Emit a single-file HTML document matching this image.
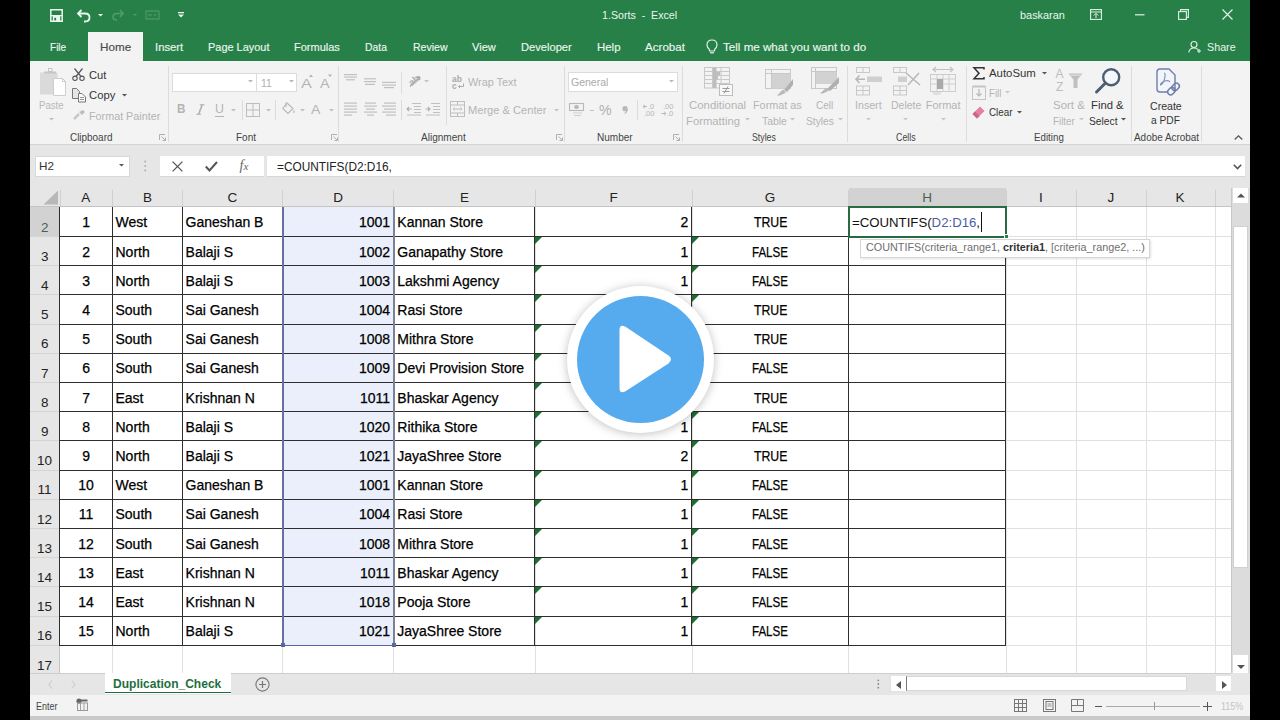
<!DOCTYPE html>
<html><head><meta charset="utf-8"><title>1.Sorts - Excel</title>
<style>
html,body{margin:0;padding:0;}
body{width:1280px;height:720px;background:#000;position:relative;overflow:hidden;font-family:"Liberation Sans", sans-serif;}
body div{position:absolute;box-sizing:border-box;}
.t{line-height:1;white-space:nowrap;}
.c{-webkit-text-stroke:0.25px #000;}
svg{position:absolute;overflow:visible;}
</style></head><body>

<div style="left:30px;top:0px;width:1220px;height:720px;background:#e6e6e6"></div>
<div style="left:30px;top:0px;width:1220px;height:61px;background:#278047"></div>
<div style="left:30px;top:61px;width:1220px;height:84px;background:#f3f3f3"></div>
<div style="left:30px;top:144px;width:1220px;height:1px;background:#d4d4d4"></div>
<div style="left:88px;top:32px;width:55px;height:30px;background:#f3f3f3"></div>
<div class="t" style="left:602.00px;top:10.19px;font-size:11px;color:#eaf6ee;transform:scaleX(0.9679);transform-origin:0 0;">1.Sorts&nbsp; - &nbsp;Excel</div>
<div class="t" style="left:1020.40px;top:10.19px;font-size:11px;color:#eaf6ee;transform:scaleX(0.9911);transform-origin:0 0;">baskaran</div>
<div class="t" style="left:50.00px;top:41.63px;font-size:11.3px;color:#eaf6ee;transform:scaleX(0.8889);transform-origin:0 0;-webkit-text-stroke:0.15px #eaf6ee;">File</div>
<div class="t" style="left:155.00px;top:41.63px;font-size:11.3px;color:#eaf6ee;-webkit-text-stroke:0.15px #eaf6ee;">Insert</div>
<div class="t" style="left:208.00px;top:41.63px;font-size:11.3px;color:#eaf6ee;transform:scaleX(0.9683);transform-origin:0 0;-webkit-text-stroke:0.15px #eaf6ee;">Page Layout</div>
<div class="t" style="left:293.75px;top:41.63px;font-size:11.3px;color:#eaf6ee;transform:scaleX(0.9734);transform-origin:0 0;-webkit-text-stroke:0.15px #eaf6ee;">Formulas</div>
<div class="t" style="left:365.00px;top:41.63px;font-size:11.3px;color:#eaf6ee;transform:scaleX(0.9200);transform-origin:0 0;-webkit-text-stroke:0.15px #eaf6ee;">Data</div>
<div class="t" style="left:413.00px;top:41.63px;font-size:11.3px;color:#eaf6ee;transform:scaleX(0.9324);transform-origin:0 0;-webkit-text-stroke:0.15px #eaf6ee;">Review</div>
<div class="t" style="left:472.00px;top:41.63px;font-size:11.3px;color:#eaf6ee;transform:scaleX(0.9792);transform-origin:0 0;-webkit-text-stroke:0.15px #eaf6ee;">View</div>
<div class="t" style="left:520.50px;top:41.63px;font-size:11.3px;color:#eaf6ee;transform:scaleX(0.9856);transform-origin:0 0;-webkit-text-stroke:0.15px #eaf6ee;">Developer</div>
<div class="t" style="left:596.75px;top:41.63px;font-size:11.3px;color:#eaf6ee;transform:scaleX(1.0109);transform-origin:0 0;-webkit-text-stroke:0.15px #eaf6ee;">Help</div>
<div class="t" style="left:645.00px;top:41.63px;font-size:11.3px;color:#eaf6ee;transform:scaleX(1.0256);transform-origin:0 0;-webkit-text-stroke:0.15px #eaf6ee;">Acrobat</div>
<div class="t" style="left:723.00px;top:41.63px;font-size:11.3px;color:#eaf6ee;transform:scaleX(1.0270);transform-origin:0 0;-webkit-text-stroke:0.15px #eaf6ee;">Tell me what you want to do</div>
<div class="t" style="left:99.50px;top:41.63px;font-size:11.3px;color:#4a4a4a;transform:scaleX(1.0333);transform-origin:0 0;-webkit-text-stroke:0.15px #4a4a4a;">Home</div>
<div class="t" style="left:1206.70px;top:42.19px;font-size:11px;color:#eaf6ee;transform:scaleX(0.9759);transform-origin:0 0;">Share</div>
<svg style="left:50px;top:9px;" width="13" height="13" viewBox="0 0 13 13"><path d="M0.8 0.8 H12.2 V12.2 H0.8 Z" fill="none" stroke="#eaf6ee" stroke-width="1.5"/><rect x="0.8" y="6" width="11.4" height="1.3" fill="#eaf6ee"/><rect x="2.8" y="7" width="7.4" height="5" fill="#eaf6ee"/><rect x="4.3" y="8.8" width="1.8" height="2.6" fill="#278047"/></svg>
<svg style="left:77px;top:9px;" width="14" height="14" viewBox="0 0 14 14"><path d="M4.5 1 L1 4.5 L4.5 8" fill="none" stroke="#eaf6ee" stroke-width="1.8"/><path d="M1.5 4.5 H8 Q12.5 4.5 12.5 8.5 Q12.5 12.5 8 12.5 H7" fill="none" stroke="#eaf6ee" stroke-width="1.8"/></svg>
<svg style="left:98px;top:14px;" width="5" height="3" viewBox="0 0 5 3"><path d="M0 0 H5 L2.5 2.5 Z" fill="#eaf6ee"/></svg>
<svg style="left:112px;top:9px;" width="12" height="12" viewBox="0 0 12 12"><path d="M8 1 L11 4.5 L8 8" fill="none" stroke="#4f9d6c" stroke-width="1.6"/><path d="M10.5 4.5 H5 Q1 4.5 1 8 Q1 11 5 11" fill="none" stroke="#4f9d6c" stroke-width="1.6"/></svg>
<svg style="left:133px;top:14px;" width="4" height="3" viewBox="0 0 4 3"><path d="M0 0 H4 L2 2 Z" fill="#4f9d6c"/></svg>
<svg style="left:145px;top:9px;" width="15" height="11" viewBox="0 0 15 11"><path d="M1 2 H14 V10 H1 Z" fill="none" stroke="#4a9566" stroke-width="1.3"/><path d="M3 5 L5 7 L7 5 M9 7 L11 5" fill="none" stroke="#4a9566" stroke-width="1.1"/></svg>
<svg style="left:177.5px;top:12px;" width="6" height="6" viewBox="0 0 6 6"><rect x="0" y="0" width="6" height="1.3" fill="#eaf6ee"/><path d="M0 2.5 H6 L3 5.5 Z" fill="#eaf6ee"/></svg>
<svg style="left:1090px;top:9px;" width="12" height="11" viewBox="0 0 12 11"><rect x="0.6" y="0.6" width="10.8" height="9.8" fill="none" stroke="#e2f1e7" stroke-width="1.1"/><path d="M0.6 3 H11.4" stroke="#e2f1e7" stroke-width="1"/><path d="M6 9 V4.5 M3.8 6.5 L6 4.3 L8.2 6.5" fill="none" stroke="#e2f1e7" stroke-width="1"/></svg>
<svg style="left:1135px;top:14px;" width="10" height="2" viewBox="0 0 10 2"><rect x="0" y="0.2" width="9.5" height="1.2" fill="#e2f1e7"/></svg>
<svg style="left:1178px;top:9px;" width="11" height="11" viewBox="0 0 11 11"><rect x="0.6" y="2.6" width="7.8" height="7.8" fill="none" stroke="#e2f1e7" stroke-width="1.1"/><path d="M2.6 2.6 V0.6 H10.4 V8.4 H8.4" fill="none" stroke="#e2f1e7" stroke-width="1.1"/></svg>
<svg style="left:1222px;top:9px;" width="11" height="11" viewBox="0 0 11 11"><path d="M0.5 0.5 L10.5 10.5 M10.5 0.5 L0.5 10.5" stroke="#e2f1e7" stroke-width="1.2"/></svg>
<svg style="left:706px;top:39px;" width="12" height="16" viewBox="0 0 12 16"><path d="M6 1 Q11 1 11 6 Q11 8.5 8.5 10.5 V12 H3.5 V10.5 Q1 8.5 1 6 Q1 1 6 1 Z" fill="none" stroke="#e2f1e7" stroke-width="1.2"/><path d="M4 13.8 H8" stroke="#e2f1e7" stroke-width="1.2"/></svg>
<svg style="left:1188px;top:41px;" width="14" height="12" viewBox="0 0 14 12"><circle cx="6" cy="3.5" r="3" fill="none" stroke="#e2f1e7" stroke-width="1.1"/><path d="M0.8 11.5 Q1.5 7 6 7 Q8.5 7 10 8.5" fill="none" stroke="#e2f1e7" stroke-width="1.1"/><path d="M11 8 V12 M9 10 H13" stroke="#e2f1e7" stroke-width="1.1"/></svg>
<div style="left:168px;top:66px;width:1px;height:76px;background:#dcdcdc"></div>
<div style="left:338px;top:66px;width:1px;height:76px;background:#dcdcdc"></div>
<div style="left:564px;top:66px;width:1px;height:76px;background:#dcdcdc"></div>
<div style="left:681.5px;top:66px;width:1px;height:76px;background:#dcdcdc"></div>
<div style="left:847px;top:66px;width:1px;height:76px;background:#dcdcdc"></div>
<div style="left:966px;top:66px;width:1px;height:76px;background:#dcdcdc"></div>
<div style="left:1130.5px;top:66px;width:1px;height:76px;background:#dcdcdc"></div>
<div style="left:1200.5px;top:66px;width:1px;height:76px;background:#dcdcdc"></div>
<div class="t" style="left:70.30px;top:132.41px;font-size:10.5px;color:#444;transform:scaleX(0.9444);transform-origin:0 0;">Clipboard</div>
<div class="t" style="left:236.00px;top:132.41px;font-size:10.5px;color:#444;transform:scaleX(0.9524);transform-origin:0 0;">Font</div>
<div class="t" style="left:421.00px;top:132.41px;font-size:10.5px;color:#444;transform:scaleX(0.9574);transform-origin:0 0;">Alignment</div>
<div class="t" style="left:596.90px;top:132.41px;font-size:10.5px;color:#444;transform:scaleX(0.9553);transform-origin:0 0;">Number</div>
<div class="t" style="left:751.70px;top:132.41px;font-size:10.5px;color:#444;transform:scaleX(0.8345);transform-origin:0 0;">Styles</div>
<div class="t" style="left:896.30px;top:132.41px;font-size:10.5px;color:#444;transform:scaleX(0.8417);transform-origin:0 0;">Cells</div>
<div class="t" style="left:1033.80px;top:132.41px;font-size:10.5px;color:#444;transform:scaleX(0.9281);transform-origin:0 0;">Editing</div>
<div class="t" style="left:1133.60px;top:132.41px;font-size:10.5px;color:#444;transform:scaleX(0.9449);transform-origin:0 0;">Adobe Acrobat</div>
<svg style="left:159px;top:134px;" width="7" height="7" viewBox="0 0 7 7"><path d="M0.5 0.5 H6 M0.5 0.5 V6" stroke="#b0b0b0" stroke-width="1" fill="none"/><path d="M2.5 2.5 L6.5 6.5 M6.5 3.5 V6.5 H3.5" stroke="#b0b0b0" stroke-width="1" fill="none"/></svg>
<svg style="left:331px;top:134px;" width="7" height="7" viewBox="0 0 7 7"><path d="M0.5 0.5 H6 M0.5 0.5 V6" stroke="#b0b0b0" stroke-width="1" fill="none"/><path d="M2.5 2.5 L6.5 6.5 M6.5 3.5 V6.5 H3.5" stroke="#b0b0b0" stroke-width="1" fill="none"/></svg>
<svg style="left:556px;top:134px;" width="7" height="7" viewBox="0 0 7 7"><path d="M0.5 0.5 H6 M0.5 0.5 V6" stroke="#b0b0b0" stroke-width="1" fill="none"/><path d="M2.5 2.5 L6.5 6.5 M6.5 3.5 V6.5 H3.5" stroke="#b0b0b0" stroke-width="1" fill="none"/></svg>
<svg style="left:673px;top:134px;" width="7" height="7" viewBox="0 0 7 7"><path d="M0.5 0.5 H6 M0.5 0.5 V6" stroke="#b0b0b0" stroke-width="1" fill="none"/><path d="M2.5 2.5 L6.5 6.5 M6.5 3.5 V6.5 H3.5" stroke="#b0b0b0" stroke-width="1" fill="none"/></svg>
<svg style="left:1234px;top:134.5px;" width="9" height="5" viewBox="0 0 9 5"><path d="M0.7 4.5 L4.5 0.8 L8.3 4.5" fill="none" stroke="#555" stroke-width="1.3"/></svg>
<svg style="left:39px;top:66px;" width="28" height="31" viewBox="0 0 28 31"><rect x="1" y="6.5" width="17.5" height="22" fill="#dadada"/><rect x="5" y="5.5" width="12" height="2" fill="#c6c6c6"/><rect x="9.5" y="2.5" width="3.5" height="3" fill="none" stroke="#c6c6c6" stroke-width="1"/><path d="M14.5 12.5 H23.5 L26.5 15.5 V29.5 H14.5 Z" fill="#fff" stroke="#cdcdcd" stroke-width="1"/><path d="M23.5 12.5 V15.5 H26.5" fill="none" stroke="#cdcdcd" stroke-width="1"/></svg>
<div class="t" style="left:38.75px;top:99.81px;font-size:10.5px;color:#b8b8b8;transform:scaleX(0.9130);transform-origin:0 0;">Paste</div>
<svg style="left:48.5px;top:118.0px;" width="5" height="3" viewBox="0 0 5 3"><path d="M0 0 H5 L2.5 2.6 Z" fill="#c0c0c0"/></svg>
<svg style="left:72px;top:68px;" width="13" height="13" viewBox="0 0 13 13"><path d="M2.5 0.5 L9 8.5 M10.5 0.5 L4 8.5" stroke="#555" stroke-width="1.2" fill="none"/><circle cx="3" cy="10.3" r="2.2" fill="none" stroke="#555" stroke-width="1.1"/><circle cx="10" cy="10.3" r="2.2" fill="none" stroke="#555" stroke-width="1.1"/></svg>
<div class="t" style="left:88.60px;top:69.89px;font-size:11px;color:#333;transform:scaleX(1.0118);transform-origin:0 0;">Cut</div>
<svg style="left:72px;top:88px;" width="14" height="14" viewBox="0 0 14 14"><path d="M0.5 0.5 H4.5 L7.5 3.5 V10.5 H0.5 Z" fill="#e6e6e6" stroke="#777" stroke-width="1"/><path d="M6.5 5.5 H10 L13.5 9 V14 H6.5 Z" fill="#fafafa" stroke="#777" stroke-width="1"/><path d="M8 9.5 H12 M8 11.5 H12" stroke="#888" stroke-width="0.9"/></svg>
<div class="t" style="left:88.60px;top:89.99px;font-size:11px;color:#333;transform:scaleX(1.0231);transform-origin:0 0;">Copy</div>
<svg style="left:121.5px;top:93.5px;" width="5" height="3" viewBox="0 0 5 3"><path d="M0 0 H5 L2.5 2.6 Z" fill="#555"/></svg>
<svg style="left:73px;top:110px;" width="13" height="10" viewBox="0 0 13 10"><path d="M1 9 L6 4" stroke="#c8c8c8" stroke-width="2.5"/><path d="M6 2 L9 5 L12 2 L10 0 Z" fill="#bdbdbd"/></svg>
<div class="t" style="left:89.00px;top:111.29px;font-size:11px;color:#b4b4b4;transform:scaleX(0.9795);transform-origin:0 0;">Format Painter</div>
<div style="left:171.5px;top:72.5px;width:85px;height:19.5px;background:#fff;border:1px solid #dcdcdc"></div>
<div style="left:256px;top:72.5px;width:41px;height:19.5px;background:#fff;border:1px solid #dcdcdc"></div>
<svg style="left:248.3px;top:80.0px;" width="5" height="3" viewBox="0 0 5 3"><path d="M0 0 H5 L2.5 2.6 Z" fill="#b8b8b8"/></svg>
<svg style="left:289.1px;top:80.0px;" width="5" height="3" viewBox="0 0 5 3"><path d="M0 0 H5 L2.5 2.6 Z" fill="#b8b8b8"/></svg>
<div class="t" style="left:260.60px;top:77.71px;font-size:10.5px;color:#b0b0b0;transform:scaleX(0.9909);transform-origin:0 0;">11</div>
<div class="t" style="left:300.70px;top:76.57px;font-size:13.5px;color:#b4b4b4;transform:scaleX(1.2000);transform-origin:0 0;">A</div>
<svg style="left:309px;top:74px;" width="4" height="3" viewBox="0 0 4 3"><path d="M0 3 L2 0.5 L4 3Z" fill="#b0b0b0"/></svg>
<div class="t" style="left:320.40px;top:77.84px;font-size:12px;color:#b4b4b4;transform:scaleX(1.2000);transform-origin:0 0;">A</div>
<svg style="left:328px;top:74px;" width="4" height="3" viewBox="0 0 4 3"><path d="M0 0.5 H4 L2 3Z" fill="#b0b0b0"/></svg>
<div class="t" style="left:177.00px;top:103.42px;font-size:12.5px;color:#b4b4b4;font-weight:bold;transform:scaleX(0.9333);transform-origin:0 0;">B</div>
<svg style="left:196px;top:104px;" width="9" height="11" viewBox="0 0 9 11"><path d="M6.2 0.8 L2.6 10.2" stroke="#b0b0b0" stroke-width="1.6"/><path d="M3.8 0.8 H8.5 M0.3 10.2 H5" stroke="#b0b0b0" stroke-width="1.1"/></svg>
<div class="t" style="left:214.50px;top:103.42px;font-size:12.5px;color:#b4b4b4;transform:scaleX(0.9889);transform-origin:0 0;">U</div>
<div style="left:214.5px;top:116px;width:9px;height:1px;background:#b4b4b4"></div>
<svg style="left:231.1px;top:108.5px;" width="5" height="3" viewBox="0 0 5 3"><path d="M0 0 H5 L2.5 2.6 Z" fill="#c0c0c0"/></svg>
<div style="left:241.6px;top:100px;width:1px;height:20px;background:#dcdcdc"></div>
<svg style="left:246px;top:103px;" width="14" height="14" viewBox="0 0 14 14"><rect x="0.5" y="0.5" width="13" height="13" fill="none" stroke="#bdbdbd" stroke-width="1"/><path d="M7 0.5 V13.5 M0.5 7 H13.5" stroke="#bdbdbd" stroke-width="1"/></svg>
<svg style="left:265.9px;top:108.5px;" width="5" height="3" viewBox="0 0 5 3"><path d="M0 0 H5 L2.5 2.6 Z" fill="#c0c0c0"/></svg>
<div style="left:274.7px;top:100px;width:1px;height:20px;background:#dcdcdc"></div>
<svg style="left:282px;top:102px;" width="13" height="13" viewBox="0 0 13 13"><path d="M5 1 L11 6.5 L6 11.5 L0.8 6.5 Z" fill="none" stroke="#b8b8b8" stroke-width="1.1"/><path d="M4 0.5 V5" stroke="#b8b8b8" stroke-width="1.1"/><path d="M11.5 8 Q12.8 10 11.5 11" stroke="#c0c0c0" stroke-width="1.2" fill="none"/></svg>
<svg style="left:299.5px;top:108.5px;" width="5" height="3" viewBox="0 0 5 3"><path d="M0 0 H5 L2.5 2.6 Z" fill="#c0c0c0"/></svg>
<div class="t" style="left:311.30px;top:103.00px;font-size:13px;color:#b4b4b4;transform:scaleX(1.0778);transform-origin:0 0;">A</div>
<svg style="left:328.5px;top:108.5px;" width="5" height="3" viewBox="0 0 5 3"><path d="M0 0 H5 L2.5 2.6 Z" fill="#c0c0c0"/></svg>
<svg style="left:344.3px;top:0px;" width="16" height="130" viewBox="0 0 16 130"><rect x="0" y="74" width="13" height="1.2" fill="#c0c0c0"/><rect x="0" y="76.5" width="13" height="1.2" fill="#c0c0c0"/><rect x="2" y="79.2" width="9" height="1.2" fill="#c0c0c0"/></svg>
<svg style="left:364px;top:0px;" width="16" height="130" viewBox="0 0 16 130"><rect x="0" y="78.2" width="12" height="1.2" fill="#c0c0c0"/><rect x="0" y="81" width="12" height="1.2" fill="#c0c0c0"/><rect x="1" y="83.8" width="10" height="1.2" fill="#c0c0c0"/></svg>
<svg style="left:382px;top:0px;" width="16" height="130" viewBox="0 0 16 130"><rect x="0" y="81.8" width="14" height="1.2" fill="#c0c0c0"/><rect x="0" y="84.5" width="14" height="1.2" fill="#c0c0c0"/><rect x="2" y="87" width="10" height="1.2" fill="#c0c0c0"/></svg>
<div style="left:401.3px;top:72px;width:1px;height:22px;background:#dcdcdc"></div>
<svg style="left:407px;top:74px;" width="14" height="14" viewBox="0 0 14 14"><text x="1" y="10" font-size="9.5" font-weight="bold" fill="#b0b0b0" font-family="Liberation Sans" transform="rotate(-40 6 6)">ab</text><path d="M3 12.5 L12.5 3 M9.5 2.8 H12.7 V6" stroke="#a8a8a8" stroke-width="1.2" fill="none"/></svg>
<svg style="left:423.9px;top:79.5px;" width="5" height="3" viewBox="0 0 5 3"><path d="M0 0 H5 L2.5 2.6 Z" fill="#c4c4c4"/></svg>
<svg style="left:344.3px;top:0px;" width="16" height="130" viewBox="0 0 16 130"><rect x="0" y="102.5" width="13" height="1.2" fill="#c0c0c0"/><rect x="0" y="105.5" width="13" height="1.2" fill="#c0c0c0"/><rect x="0" y="108.5" width="13" height="1.2" fill="#c0c0c0"/><rect x="0" y="111.5" width="13" height="1.2" fill="#c0c0c0"/><rect x="0" y="114.5" width="8" height="1.2" fill="#c0c0c0"/></svg>
<svg style="left:364px;top:0px;" width="16" height="130" viewBox="0 0 16 130"><rect x="1" y="102.5" width="11" height="1.2" fill="#c0c0c0"/><rect x="0" y="105.5" width="13" height="1.2" fill="#c0c0c0"/><rect x="2" y="108.5" width="9" height="1.2" fill="#c0c0c0"/><rect x="0" y="111.5" width="13" height="1.2" fill="#c0c0c0"/><rect x="3" y="114.5" width="7" height="1.2" fill="#c0c0c0"/></svg>
<svg style="left:382px;top:0px;" width="16" height="130" viewBox="0 0 16 130"><rect x="2" y="102.5" width="12" height="1.2" fill="#c0c0c0"/><rect x="0" y="105.5" width="14" height="1.2" fill="#c0c0c0"/><rect x="2" y="108.5" width="12" height="1.2" fill="#c0c0c0"/><rect x="0" y="111.5" width="14" height="1.2" fill="#c0c0c0"/><rect x="4" y="114.5" width="10" height="1.2" fill="#c0c0c0"/></svg>
<div style="left:401.3px;top:100px;width:1px;height:20px;background:#dcdcdc"></div>
<svg style="left:406px;top:102px;" width="16" height="14" viewBox="0 0 16 14"><path d="M6 1.5 H15 M8 4.5 H15 M8 7.5 H15 M8 10.5 H15 M1 13 H15" stroke="#c0c0c0" stroke-width="1.1"/><path d="M5.5 7 H1 M3 5 L1 7 L3 9" stroke="#b0b0b0" stroke-width="1.1" fill="none"/></svg>
<svg style="left:425px;top:102px;" width="16" height="14" viewBox="0 0 16 14"><path d="M6 1.5 H15 M8 4.5 H15 M8 7.5 H15 M8 10.5 H15 M1 13 H15" stroke="#c0c0c0" stroke-width="1.1"/><path d="M0.5 7 H5 M3 5 L5 7 L3 9" stroke="#b0b0b0" stroke-width="1.1" fill="none"/></svg>
<div style="left:445.8px;top:66px;width:1px;height:59px;background:#dcdcdc"></div>
<svg style="left:451.5px;top:74.5px;" width="13" height="15" viewBox="0 0 13 15"><text x="0" y="7" font-size="8.5" font-weight="bold" fill="#ababab" font-family="Liberation Sans">ab</text><text x="0" y="14" font-size="8.5" font-weight="bold" fill="#ababab" font-family="Liberation Sans">c</text><path d="M11.5 8.5 V11.5 H6.5 M8 10 L6.5 11.5 L8 13" stroke="#ababab" stroke-width="1" fill="none"/></svg>
<div class="t" style="left:467.70px;top:76.99px;font-size:11px;color:#b4b4b4;transform:scaleX(0.9857);transform-origin:0 0;">Wrap Text</div>
<svg style="left:449.8px;top:100.5px;" width="15" height="16" viewBox="0 0 15 16"><rect x="0.5" y="0.5" width="14" height="15" fill="none" stroke="#bfbfbf" stroke-width="1"/><path d="M0.5 4 H14.5 M0.5 12 H14.5 M7.5 0.5 V4 M7.5 12 V15.5 M3 8 H12 M4.5 6.5 L3 8 L4.5 9.5 M10.5 6.5 L12 8 L10.5 9.5" stroke="#bfbfbf" stroke-width="1" fill="none"/></svg>
<div class="t" style="left:467.70px;top:104.69px;font-size:11px;color:#b4b4b4;transform:scaleX(1.0090);transform-origin:0 0;">Merge &amp; Center</div>
<svg style="left:553.8px;top:108.5px;" width="5" height="3" viewBox="0 0 5 3"><path d="M0 0 H5 L2.5 2.6 Z" fill="#c4c4c4"/></svg>
<div style="left:567.5px;top:72.4px;width:110px;height:19.4px;background:#fff;border:1px solid #dcdcdc"></div>
<div class="t" style="left:571.00px;top:76.89px;font-size:11px;color:#aaaaaa;transform:scaleX(0.9538);transform-origin:0 0;">General</div>
<svg style="left:669.3px;top:80.0px;" width="5" height="3" viewBox="0 0 5 3"><path d="M0 0 H5 L2.5 2.6 Z" fill="#b8b8b8"/></svg>
<svg style="left:569px;top:103px;" width="16" height="14" viewBox="0 0 16 14"><rect x="0.5" y="0.5" width="14" height="7" fill="none" stroke="#b8b8b8" stroke-width="1.1"/><ellipse cx="7.5" cy="4" rx="2.5" ry="2" fill="#b8b8b8"/><path d="M4 10 H13 M5 12.5 H12" stroke="#d0d0d0" stroke-width="1.1"/></svg>
<div style="left:590px;top:110px;width:4px;height:1.2px;background:#c4c4c4"></div>
<div class="t" style="left:599.20px;top:103.33px;font-size:14.5px;color:#b0b0b0;transform:scaleX(0.9769);transform-origin:0 0;">%</div>
<svg style="left:621.7px;top:105.5px;" width="6" height="8" viewBox="0 0 6 8"><circle cx="3" cy="2.7" r="2.6" fill="#b8b8b8"/><path d="M5.3 3 Q5 6.5 2.5 7.5" stroke="#b8b8b8" stroke-width="1.3" fill="none"/></svg>
<div style="left:637.4px;top:100px;width:1px;height:20px;background:#dcdcdc"></div>
<svg style="left:642px;top:103px;" width="15" height="14" viewBox="0 0 15 14"><path d="M5 3.5 H1 M2.8 1.8 L1 3.5 L2.8 5.2" stroke="#b5b5b5" stroke-width="1" fill="none"/><text x="6" y="6" font-size="7.5" fill="#b5b5b5" font-family="Liberation Sans">.0</text><text x="2" y="13" font-size="7.5" fill="#b5b5b5" font-family="Liberation Sans">.00</text></svg>
<svg style="left:660.8px;top:103px;" width="15" height="14" viewBox="0 0 15 14"><text x="2" y="6" font-size="7.5" fill="#b5b5b5" font-family="Liberation Sans">.00</text><path d="M0.5 10.5 H5 M3.2 8.8 L5 10.5 L3.2 12.2" stroke="#b5b5b5" stroke-width="1" fill="none"/><text x="6" y="13" font-size="7.5" fill="#b5b5b5" font-family="Liberation Sans">.0</text></svg>
<svg style="left:704px;top:67px;" width="30" height="29" viewBox="0 0 30 29"><g stroke="#c8c8c8" stroke-width="1" fill="none"><rect x="0.5" y="0.5" width="25" height="20.5"/><path d="M8.5 0.5 V21 M17 0.5 V21 M0.5 4.5 H26 M0.5 8.5 H26 M0.5 12.5 H26 M0.5 16.5 H26"/></g><rect x="9" y="1" width="3.5" height="20" fill="#bdbdbd"/><rect x="12" y="5" width="4" height="3.5" fill="#bdbdbd"/><rect x="12" y="9" width="2" height="3" fill="#bdbdbd"/><rect x="15.5" y="17.5" width="13" height="11" fill="#f8f8f8" stroke="#bdbdbd" stroke-width="1"/><path d="M18.5 21.5 H25.5 M18.5 24.5 H25.5 M24 19.5 L20 26.5" stroke="#9a9a9a" stroke-width="1"/></svg>
<div class="t" style="left:688.60px;top:99.79px;font-size:11px;color:#b4b4b4;transform:scaleX(1.0382);transform-origin:0 0;">Conditional</div>
<div class="t" style="left:686.00px;top:115.69px;font-size:11px;color:#b4b4b4;transform:scaleX(1.0264);transform-origin:0 0;">Formatting</div>
<svg style="left:744.5px;top:117.5px;" width="5" height="3" viewBox="0 0 5 3"><path d="M0 0 H5 L2.5 2.6 Z" fill="#c4c4c4"/></svg>
<svg style="left:765px;top:69px;" width="29" height="27" viewBox="0 0 29 27"><g stroke="#c8c8c8" stroke-width="1" fill="none"><rect x="0.5" y="0.5" width="25" height="19"/><path d="M0.5 4.5 H26 M6.5 0.5 V20"/></g><rect x="7" y="5" width="18.5" height="14.5" fill="#d2d2d2"/><path d="M12 26.5 L18 20.5 L21 23.5 L15 26.5 Z" fill="#b8b8b8"/><path d="M19 21 L28 10 V16 L22 23 Z" fill="#b0b0b0"/></svg>
<div class="t" style="left:753.00px;top:99.79px;font-size:11px;color:#b4b4b4;transform:scaleX(0.9840);transform-origin:0 0;">Format as</div>
<div class="t" style="left:761.70px;top:115.69px;font-size:11px;color:#b4b4b4;transform:scaleX(0.9423);transform-origin:0 0;">Table</div>
<svg style="left:789.7px;top:117.5px;" width="5" height="3" viewBox="0 0 5 3"><path d="M0 0 H5 L2.5 2.6 Z" fill="#c4c4c4"/></svg>
<svg style="left:810.8px;top:67px;" width="29" height="27" viewBox="0 0 29 27"><g stroke="#c8c8c8" stroke-width="1" fill="none"><rect x="0.5" y="0.5" width="25" height="21"/><path d="M0.5 4.5 H26 M4.5 0.5 V22"/></g><rect x="5" y="5" width="20.5" height="12" fill="#d2d2d2"/><path d="M9 26.5 L15 21 L18 23.5 L12 26.5 Z" fill="#b8b8b8"/><path d="M16 22 L28 10 V16 L19 24 Z" fill="#b0b0b0"/></svg>
<div class="t" style="left:815.50px;top:99.79px;font-size:11px;color:#b4b4b4;transform:scaleX(0.9053);transform-origin:0 0;">Cell</div>
<div class="t" style="left:806.20px;top:115.69px;font-size:11px;color:#b4b4b4;transform:scaleX(0.9267);transform-origin:0 0;">Styles</div>
<svg style="left:837.5px;top:117.5px;" width="5" height="3" viewBox="0 0 5 3"><path d="M0 0 H5 L2.5 2.6 Z" fill="#c4c4c4"/></svg>
<svg style="left:854.8px;top:67px;" width="28" height="28" viewBox="0 0 28 28"><g stroke="#c8c8c8" stroke-width="1" fill="none"><rect x="1.5" y="0.5" width="13" height="5"/><path d="M8 0.5 V5.5"/><rect x="1.5" y="19" width="13" height="9"/><path d="M8 19 V28 M1.5 23.5 H14.5"/></g><rect x="12" y="9.5" width="15" height="5.5" fill="#cfcfcf"/><path d="M10 12.2 H1 M4.5 8.5 L1 12.2 L4.5 16" stroke="#b8b8b8" stroke-width="1.6" fill="none"/></svg>
<div class="t" style="left:855.40px;top:100.49px;font-size:11px;color:#b4b4b4;transform:scaleX(0.9679);transform-origin:0 0;">Insert</div>
<svg style="left:866.1px;top:118.1px;" width="5" height="3" viewBox="0 0 5 3"><path d="M0 0 H5 L2.5 2.6 Z" fill="#c8c8c8"/></svg>
<svg style="left:892.8px;top:67px;" width="28" height="28" viewBox="0 0 28 28"><g stroke="#c8c8c8" stroke-width="1" fill="none"><rect x="0.5" y="0.5" width="13" height="5"/><path d="M7 0.5 V5.5"/><rect x="0.5" y="19" width="13" height="9"/><path d="M7 19 V28 M0.5 23.5 H13.5"/></g><rect x="5" y="9.5" width="9" height="5.5" fill="#cfcfcf"/><path d="M13 6 L27 18 M26 6 L15 18" stroke="#b8b8b8" stroke-width="1.6"/></svg>
<div class="t" style="left:890.50px;top:100.49px;font-size:11px;color:#b4b4b4;transform:scaleX(0.9531);transform-origin:0 0;">Delete</div>
<svg style="left:903.0px;top:118.1px;" width="5" height="3" viewBox="0 0 5 3"><path d="M0 0 H5 L2.5 2.6 Z" fill="#c8c8c8"/></svg>
<svg style="left:930.3px;top:66px;" width="27" height="30" viewBox="0 0 27 30"><path d="M3 3.5 H23 M6 1 L3 3.5 L6 6 M20 1 L23 3.5 L20 6" stroke="#c0c0c0" stroke-width="1.1" fill="none"/><g stroke="#cdcdcd" stroke-width="1" fill="none"><rect x="0.5" y="8.5" width="25" height="17"/><path d="M0.5 13 H26 M0.5 18 H26 M7 8.5 V26 M13 8.5 V26 M19 8.5 V26"/></g><rect x="7" y="13" width="6" height="10" fill="#a9a9a9"/><path d="M2 26 H12 L10 29 H4 Z" fill="#e0e0e0"/></svg>
<div class="t" style="left:925.70px;top:100.49px;font-size:11px;color:#b4b4b4;">Format</div>
<svg style="left:941.0px;top:118.1px;" width="5" height="3" viewBox="0 0 5 3"><path d="M0 0 H5 L2.5 2.6 Z" fill="#c8c8c8"/></svg>
<svg style="left:973px;top:66.6px;" width="12" height="12.5" viewBox="0 0 12 12.5"><path d="M11 2.5 V0.8 H1 L6 6.2 L1 11.7 H11 V10" fill="none" stroke="#333" stroke-width="1.5"/></svg>
<div class="t" style="left:988.60px;top:68.19px;font-size:11px;color:#333;transform:scaleX(1.0333);transform-origin:0 0;">AutoSum</div>
<svg style="left:1042.2px;top:72.0px;" width="5" height="3" viewBox="0 0 5 3"><path d="M0 0 H5 L2.5 2.6 Z" fill="#555"/></svg>
<svg style="left:971.6px;top:85.2px;" width="14" height="15" viewBox="0 0 14 15"><rect x="0.5" y="2" width="13" height="12.5" fill="none" stroke="#c4c4c4" stroke-width="1"/><rect x="0.5" y="0.5" width="13" height="1.5" fill="#c4c4c4"/><path d="M7 4 V11 M4.5 8.5 L7 11 L9.5 8.5" stroke="#b8b8b8" stroke-width="1.2" fill="none"/></svg>
<div class="t" style="left:988.60px;top:87.69px;font-size:11px;color:#b4b4b4;transform:scaleX(0.8786);transform-origin:0 0;">Fill</div>
<svg style="left:1005.0px;top:91.0px;" width="5" height="3" viewBox="0 0 5 3"><path d="M0 0 H5 L2.5 2.6 Z" fill="#c8c8c8"/></svg>
<svg style="left:972.3px;top:105.8px;" width="13" height="13" viewBox="0 0 13 13"><path d="M8 0.5 L12.5 5 L5 12.5 L0.5 8 Z" fill="#e5819f"/><path d="M0.5 8 L3 5.5 L7.5 10 L5 12.5 Z" fill="#cf6485"/></svg>
<div class="t" style="left:988.60px;top:107.29px;font-size:11px;color:#333;transform:scaleX(0.8963);transform-origin:0 0;">Clear</div>
<svg style="left:1016.7px;top:111.0px;" width="5" height="3" viewBox="0 0 5 3"><path d="M0 0 H5 L2.5 2.6 Z" fill="#555"/></svg>
<svg style="left:1055px;top:67px;" width="28" height="25" viewBox="0 0 28 25"><text x="0.5" y="10.5" font-size="12" fill="#bdbdbd" font-family="Liberation Sans">A</text><text x="1" y="24" font-size="12" fill="#bdbdbd" font-family="Liberation Sans">Z</text><path d="M13.5 6.5 H27.5 L22.5 12.5 V21 L18.5 21 V12.5 Z" fill="#bfbfbf"/><path d="M14.5 7.5 H26.5 L25 9 H16 Z" fill="#d8d8d8"/></svg>
<div class="t" style="left:1052.90px;top:100.29px;font-size:11px;color:#b4b4b4;transform:scaleX(1.0419);transform-origin:0 0;">Sort &amp;</div>
<div class="t" style="left:1052.90px;top:115.69px;font-size:11px;color:#b4b4b4;transform:scaleX(0.8920);transform-origin:0 0;">Filter</div>
<svg style="left:1079.4px;top:118.0px;" width="5" height="3" viewBox="0 0 5 3"><path d="M0 0 H5 L2.5 2.6 Z" fill="#c8c8c8"/></svg>
<svg style="left:1094px;top:67px;" width="28" height="27" viewBox="0 0 28 27"><circle cx="17.2" cy="10.3" r="8" fill="#f4f8fc" stroke="#4b5e72" stroke-width="2.4"/><path d="M11.5 16 L2.5 25" stroke="#4b5e72" stroke-width="3" stroke-linecap="round"/></svg>
<div class="t" style="left:1090.90px;top:100.29px;font-size:11px;color:#333;transform:scaleX(1.0250);transform-origin:0 0;">Find &amp;</div>
<div class="t" style="left:1088.80px;top:115.69px;font-size:11px;color:#333;transform:scaleX(0.9323);transform-origin:0 0;">Select</div>
<svg style="left:1121.2px;top:118.0px;" width="5" height="3" viewBox="0 0 5 3"><path d="M0 0 H5 L2.5 2.6 Z" fill="#555"/></svg>
<svg style="left:1156px;top:68px;" width="27" height="28" viewBox="0 0 27 28"><path d="M1 4 Q1 1 4 1 H13 L19 7 V21 Q19 24 16 24 H4 Q1 24 1 21 Z" fill="#f3f5fa" stroke="#6c7fac" stroke-width="1.4"/><path d="M8 5 Q10 5 8.5 11 Q7 16 4.5 17 Q4 15 9 13 Q13 12 14 14" fill="none" stroke="#7d8fb6" stroke-width="1.1"/><g transform="rotate(-45 17.5 21)"><rect x="10.5" y="18" width="8" height="6" rx="3" fill="#f3f3f3" stroke="#6c7fac" stroke-width="1.5"/><rect x="16.5" y="18" width="8" height="6" rx="3" fill="none" stroke="#6c7fac" stroke-width="1.5"/></g></svg>
<div class="t" style="left:1149.80px;top:100.89px;font-size:11px;color:#333;transform:scaleX(0.9606);transform-origin:0 0;">Create</div>
<div class="t" style="left:1151.00px;top:115.39px;font-size:11px;color:#333;transform:scaleX(0.9290);transform-origin:0 0;">a PDF</div>
<div style="left:30px;top:145px;width:1220px;height:43px;background:#e6e6e6"></div>
<div style="left:35px;top:156px;width:95px;height:20.5px;background:#fff;border:1px solid #d8d8d8"></div>
<div class="t" style="left:39.40px;top:161.47px;font-size:11.5px;color:#333;transform:scaleX(1.0133);transform-origin:0 0;">H2</div>
<svg style="left:118.9px;top:164.0px;" width="5" height="3" viewBox="0 0 5 3"><path d="M0 0 H5 L2.5 2.6 Z" fill="#555"/></svg>
<svg style="left:144px;top:160px;" width="3" height="13" viewBox="0 0 3 13"><circle cx="1.2" cy="1.5" r="0.9" fill="#aaa"/><circle cx="1.2" cy="6" r="0.9" fill="#aaa"/><circle cx="1.2" cy="10.5" r="0.9" fill="#aaa"/></svg>
<div style="left:160px;top:156px;width:104px;height:21px;background:#fff;border-bottom:1px solid #d6d6d6"></div>
<svg style="left:171.8px;top:161px;" width="11" height="11" viewBox="0 0 11 11"><path d="M0.6 0.6 L10.4 10.4 M10.4 0.6 L0.6 10.4" stroke="#555" stroke-width="1.3"/></svg>
<svg style="left:205.3px;top:161px;" width="13" height="11" viewBox="0 0 13 11"><path d="M0.8 5.5 L4.5 9.5 L12 1" stroke="#555" stroke-width="2" fill="none"/></svg>
<div class="t" style="left:239.5px;top:159px;font-size:14px;color:#666;font-family:'Liberation Serif',serif;font-style:italic">f<span style="font-size:11px">x</span></div>
<div style="left:267px;top:156px;width:978px;height:21px;background:#fff;border-bottom:1px solid #d6d6d6"></div>
<div class="t" style="left:277.00px;top:160.33px;font-size:13.2px;color:#222;transform:scaleX(0.8984);transform-origin:0 0;">=COUNTIFS(D2:D16,</div>
<svg style="left:1233px;top:164px;" width="9" height="6" viewBox="0 0 9 6"><path d="M0.8 0.8 L4.5 4.5 L8.2 0.8" fill="none" stroke="#555" stroke-width="1.6"/></svg>
<div style="left:60px;top:207px;width:1171px;height:466px;background:#fff"></div>
<div style="left:30px;top:188px;width:1201px;height:19px;background:#e6e6e6"></div>
<div style="left:30px;top:206px;width:1201px;height:1px;background:#c4c4c4"></div>
<div style="left:30px;top:207px;width:30px;height:466px;background:#e6e6e6"></div>
<div style="left:59px;top:207px;width:1px;height:466px;background:#c4c4c4"></div>
<svg style="left:43px;top:190px;" width="16" height="15" viewBox="0 0 16 15"><path d="M15 0.5 L15 14.5 L0.5 14.5 Z" fill="#b8b8b8"/></svg>
<div style="left:848.5px;top:188px;width:157.5px;height:19px;background:#d2d2d2"></div>
<div style="left:848.5px;top:205.5px;width:157.5px;height:1.5px;background:#8aa896"></div>
<div style="left:30px;top:207px;width:29px;height:29.2px;background:#d2d2d2"></div>
<div style="left:112px;top:207px;width:1px;height:466px;background:#e0e0e0"></div>
<div style="left:60px;top:190px;width:1px;height:16px;background:#d0d0d0"></div>
<div style="left:182px;top:207px;width:1px;height:466px;background:#e0e0e0"></div>
<div style="left:112px;top:190px;width:1px;height:16px;background:#d0d0d0"></div>
<div style="left:282px;top:207px;width:1px;height:466px;background:#e0e0e0"></div>
<div style="left:182px;top:190px;width:1px;height:16px;background:#d0d0d0"></div>
<div style="left:393px;top:207px;width:1px;height:466px;background:#e0e0e0"></div>
<div style="left:282px;top:190px;width:1px;height:16px;background:#d0d0d0"></div>
<div style="left:535px;top:207px;width:1px;height:466px;background:#e0e0e0"></div>
<div style="left:393px;top:190px;width:1px;height:16px;background:#d0d0d0"></div>
<div style="left:692px;top:207px;width:1px;height:466px;background:#e0e0e0"></div>
<div style="left:535px;top:190px;width:1px;height:16px;background:#d0d0d0"></div>
<div style="left:848px;top:207px;width:1px;height:466px;background:#e0e0e0"></div>
<div style="left:692px;top:190px;width:1px;height:16px;background:#d0d0d0"></div>
<div style="left:1006px;top:207px;width:1px;height:466px;background:#e0e0e0"></div>
<div style="left:848px;top:190px;width:1px;height:16px;background:#d0d0d0"></div>
<div style="left:1076px;top:207px;width:1px;height:466px;background:#e0e0e0"></div>
<div style="left:1006px;top:190px;width:1px;height:16px;background:#d0d0d0"></div>
<div style="left:1146px;top:207px;width:1px;height:466px;background:#e0e0e0"></div>
<div style="left:1076px;top:190px;width:1px;height:16px;background:#d0d0d0"></div>
<div style="left:1215px;top:207px;width:1px;height:466px;background:#e0e0e0"></div>
<div style="left:1146px;top:190px;width:1px;height:16px;background:#d0d0d0"></div>
<div style="left:1215px;top:190px;width:1px;height:16px;background:#d0d0d0"></div>
<div style="left:60px;top:236px;width:1171px;height:1px;background:#e0e0e0"></div>
<div style="left:30px;top:236px;width:29px;height:1px;background:#d4d4d4"></div>
<div style="left:60px;top:265px;width:1171px;height:1px;background:#e0e0e0"></div>
<div style="left:30px;top:265px;width:29px;height:1px;background:#d4d4d4"></div>
<div style="left:60px;top:294px;width:1171px;height:1px;background:#e0e0e0"></div>
<div style="left:30px;top:294px;width:29px;height:1px;background:#d4d4d4"></div>
<div style="left:60px;top:324px;width:1171px;height:1px;background:#e0e0e0"></div>
<div style="left:30px;top:324px;width:29px;height:1px;background:#d4d4d4"></div>
<div style="left:60px;top:353px;width:1171px;height:1px;background:#e0e0e0"></div>
<div style="left:30px;top:353px;width:29px;height:1px;background:#d4d4d4"></div>
<div style="left:60px;top:382px;width:1171px;height:1px;background:#e0e0e0"></div>
<div style="left:30px;top:382px;width:29px;height:1px;background:#d4d4d4"></div>
<div style="left:60px;top:411px;width:1171px;height:1px;background:#e0e0e0"></div>
<div style="left:30px;top:411px;width:29px;height:1px;background:#d4d4d4"></div>
<div style="left:60px;top:440px;width:1171px;height:1px;background:#e0e0e0"></div>
<div style="left:30px;top:440px;width:29px;height:1px;background:#d4d4d4"></div>
<div style="left:60px;top:470px;width:1171px;height:1px;background:#e0e0e0"></div>
<div style="left:30px;top:470px;width:29px;height:1px;background:#d4d4d4"></div>
<div style="left:60px;top:499px;width:1171px;height:1px;background:#e0e0e0"></div>
<div style="left:30px;top:499px;width:29px;height:1px;background:#d4d4d4"></div>
<div style="left:60px;top:528px;width:1171px;height:1px;background:#e0e0e0"></div>
<div style="left:30px;top:528px;width:29px;height:1px;background:#d4d4d4"></div>
<div style="left:60px;top:557px;width:1171px;height:1px;background:#e0e0e0"></div>
<div style="left:30px;top:557px;width:29px;height:1px;background:#d4d4d4"></div>
<div style="left:60px;top:586px;width:1171px;height:1px;background:#e0e0e0"></div>
<div style="left:30px;top:586px;width:29px;height:1px;background:#d4d4d4"></div>
<div style="left:60px;top:616px;width:1171px;height:1px;background:#e0e0e0"></div>
<div style="left:30px;top:616px;width:29px;height:1px;background:#d4d4d4"></div>
<div style="left:60px;top:645px;width:1171px;height:1px;background:#e0e0e0"></div>
<div style="left:30px;top:645px;width:29px;height:1px;background:#d4d4d4"></div>
<div style="left:60px;top:674px;width:1171px;height:1px;background:#e0e0e0"></div>
<div style="left:30px;top:674px;width:29px;height:1px;background:#d4d4d4"></div>
<div class="t" style="left:81.25px;top:190.87px;font-size:13.5px;color:#222;">A</div>
<div class="t" style="left:142.90px;top:190.87px;font-size:13.5px;color:#222;">B</div>
<div class="t" style="left:227.55px;top:190.87px;font-size:13.5px;color:#222;">C</div>
<div class="t" style="left:333.35px;top:190.87px;font-size:13.5px;color:#222;">D</div>
<div class="t" style="left:459.95px;top:190.87px;font-size:13.5px;color:#222;">E</div>
<div class="t" style="left:609.50px;top:190.87px;font-size:13.5px;color:#222;">F</div>
<div class="t" style="left:764.75px;top:190.87px;font-size:13.5px;color:#222;">G</div>
<div class="t" style="left:922.25px;top:190.87px;font-size:13.5px;color:#4a6152;">H</div>
<div class="t" style="left:1039.00px;top:190.87px;font-size:13.5px;color:#222;">I</div>
<div class="t" style="left:1107.50px;top:190.87px;font-size:13.5px;color:#222;">J</div>
<div class="t" style="left:1175.50px;top:190.87px;font-size:13.5px;color:#222;">K</div>
<div class="t" style="left:41.00px;top:220.57px;font-size:13.5px;color:#4a6152;">2</div>
<div class="t" style="left:41.00px;top:249.77px;font-size:13.5px;color:#222;">3</div>
<div class="t" style="left:41.00px;top:278.97px;font-size:13.5px;color:#222;">4</div>
<div class="t" style="left:41.00px;top:308.17px;font-size:13.5px;color:#222;">5</div>
<div class="t" style="left:41.00px;top:337.37px;font-size:13.5px;color:#222;">6</div>
<div class="t" style="left:41.00px;top:366.57px;font-size:13.5px;color:#222;">7</div>
<div class="t" style="left:41.00px;top:395.77px;font-size:13.5px;color:#222;">8</div>
<div class="t" style="left:41.00px;top:424.97px;font-size:13.5px;color:#222;">9</div>
<div class="t" style="left:37.00px;top:454.17px;font-size:13.5px;color:#222;">10</div>
<div class="t" style="left:37.50px;top:483.37px;font-size:13.5px;color:#222;">11</div>
<div class="t" style="left:37.00px;top:512.57px;font-size:13.5px;color:#222;">12</div>
<div class="t" style="left:37.00px;top:541.77px;font-size:13.5px;color:#222;">13</div>
<div class="t" style="left:37.00px;top:570.97px;font-size:13.5px;color:#222;">14</div>
<div class="t" style="left:37.00px;top:600.17px;font-size:13.5px;color:#222;">15</div>
<div class="t" style="left:37.00px;top:629.37px;font-size:13.5px;color:#222;">16</div>
<div class="t" style="left:37.00px;top:658.57px;font-size:13.5px;color:#222;">17</div>
<div style="left:282.8px;top:207px;width:111.1px;height:438.29999999999995px;background:#eaeffb"></div>
<div class="t" style="left:82.30px;top:215.35px;font-size:14px;color:#000;-webkit-text-stroke:0.25px #000;">1</div>
<div class="t" style="left:115.50px;top:215.35px;font-size:14px;color:#000;-webkit-text-stroke:0.25px #000;">West</div>
<div class="t" style="left:185.60px;top:215.35px;font-size:14px;color:#000;-webkit-text-stroke:0.25px #000;">Ganeshan B</div>
<div class="t" style="left:359.00px;top:215.35px;font-size:14px;color:#000;-webkit-text-stroke:0.25px #000;">1001</div>
<div class="t" style="left:397.30px;top:215.35px;font-size:14px;color:#000;-webkit-text-stroke:0.25px #000;">Kannan Store</div>
<div class="t" style="left:680.50px;top:215.35px;font-size:14px;color:#000;-webkit-text-stroke:0.25px #000;">2</div>
<div class="t" style="left:753.95px;top:215.35px;font-size:14px;color:#000;transform:scaleX(0.8763);transform-origin:0 0;-webkit-text-stroke:0.25px #000;">TRUE</div>
<div class="t" style="left:82.30px;top:244.55px;font-size:14px;color:#000;-webkit-text-stroke:0.25px #000;">2</div>
<div class="t" style="left:115.50px;top:244.55px;font-size:14px;color:#000;-webkit-text-stroke:0.25px #000;">North</div>
<div class="t" style="left:185.60px;top:244.55px;font-size:14px;color:#000;-webkit-text-stroke:0.25px #000;">Balaji S</div>
<div class="t" style="left:359.00px;top:244.55px;font-size:14px;color:#000;-webkit-text-stroke:0.25px #000;">1002</div>
<div class="t" style="left:397.30px;top:244.55px;font-size:14px;color:#000;-webkit-text-stroke:0.25px #000;">Ganapathy Store</div>
<div class="t" style="left:680.50px;top:244.55px;font-size:14px;color:#000;-webkit-text-stroke:0.25px #000;">1</div>
<div class="t" style="left:752.45px;top:244.55px;font-size:14px;color:#000;transform:scaleX(0.8250);transform-origin:0 0;-webkit-text-stroke:0.25px #000;">FALSE</div>
<div class="t" style="left:82.30px;top:273.75px;font-size:14px;color:#000;-webkit-text-stroke:0.25px #000;">3</div>
<div class="t" style="left:115.50px;top:273.75px;font-size:14px;color:#000;-webkit-text-stroke:0.25px #000;">North</div>
<div class="t" style="left:185.60px;top:273.75px;font-size:14px;color:#000;-webkit-text-stroke:0.25px #000;">Balaji S</div>
<div class="t" style="left:359.00px;top:273.75px;font-size:14px;color:#000;-webkit-text-stroke:0.25px #000;">1003</div>
<div class="t" style="left:397.30px;top:273.75px;font-size:14px;color:#000;-webkit-text-stroke:0.25px #000;">Lakshmi Agency</div>
<div class="t" style="left:680.50px;top:273.75px;font-size:14px;color:#000;-webkit-text-stroke:0.25px #000;">1</div>
<div class="t" style="left:752.45px;top:273.75px;font-size:14px;color:#000;transform:scaleX(0.8250);transform-origin:0 0;-webkit-text-stroke:0.25px #000;">FALSE</div>
<div class="t" style="left:82.30px;top:302.95px;font-size:14px;color:#000;-webkit-text-stroke:0.25px #000;">4</div>
<div class="t" style="left:115.50px;top:302.95px;font-size:14px;color:#000;-webkit-text-stroke:0.25px #000;">South</div>
<div class="t" style="left:185.60px;top:302.95px;font-size:14px;color:#000;-webkit-text-stroke:0.25px #000;">Sai Ganesh</div>
<div class="t" style="left:359.00px;top:302.95px;font-size:14px;color:#000;-webkit-text-stroke:0.25px #000;">1004</div>
<div class="t" style="left:397.30px;top:302.95px;font-size:14px;color:#000;-webkit-text-stroke:0.25px #000;">Rasi Store</div>
<div class="t" style="left:680.50px;top:302.95px;font-size:14px;color:#000;-webkit-text-stroke:0.25px #000;">2</div>
<div class="t" style="left:753.95px;top:302.95px;font-size:14px;color:#000;transform:scaleX(0.8763);transform-origin:0 0;-webkit-text-stroke:0.25px #000;">TRUE</div>
<div class="t" style="left:82.30px;top:332.15px;font-size:14px;color:#000;-webkit-text-stroke:0.25px #000;">5</div>
<div class="t" style="left:115.50px;top:332.15px;font-size:14px;color:#000;-webkit-text-stroke:0.25px #000;">South</div>
<div class="t" style="left:185.60px;top:332.15px;font-size:14px;color:#000;-webkit-text-stroke:0.25px #000;">Sai Ganesh</div>
<div class="t" style="left:359.00px;top:332.15px;font-size:14px;color:#000;-webkit-text-stroke:0.25px #000;">1008</div>
<div class="t" style="left:397.30px;top:332.15px;font-size:14px;color:#000;-webkit-text-stroke:0.25px #000;">Mithra Store</div>
<div class="t" style="left:680.50px;top:332.15px;font-size:14px;color:#000;-webkit-text-stroke:0.25px #000;">2</div>
<div class="t" style="left:753.95px;top:332.15px;font-size:14px;color:#000;transform:scaleX(0.8763);transform-origin:0 0;-webkit-text-stroke:0.25px #000;">TRUE</div>
<div class="t" style="left:82.30px;top:361.35px;font-size:14px;color:#000;-webkit-text-stroke:0.25px #000;">6</div>
<div class="t" style="left:115.50px;top:361.35px;font-size:14px;color:#000;-webkit-text-stroke:0.25px #000;">South</div>
<div class="t" style="left:185.60px;top:361.35px;font-size:14px;color:#000;-webkit-text-stroke:0.25px #000;">Sai Ganesh</div>
<div class="t" style="left:359.00px;top:361.35px;font-size:14px;color:#000;-webkit-text-stroke:0.25px #000;">1009</div>
<div class="t" style="left:397.30px;top:361.35px;font-size:14px;color:#000;-webkit-text-stroke:0.25px #000;">Devi Provision Store</div>
<div class="t" style="left:680.50px;top:361.35px;font-size:14px;color:#000;-webkit-text-stroke:0.25px #000;">1</div>
<div class="t" style="left:752.45px;top:361.35px;font-size:14px;color:#000;transform:scaleX(0.8250);transform-origin:0 0;-webkit-text-stroke:0.25px #000;">FALSE</div>
<div class="t" style="left:82.30px;top:390.55px;font-size:14px;color:#000;-webkit-text-stroke:0.25px #000;">7</div>
<div class="t" style="left:115.50px;top:390.55px;font-size:14px;color:#000;-webkit-text-stroke:0.25px #000;">East</div>
<div class="t" style="left:185.60px;top:390.55px;font-size:14px;color:#000;-webkit-text-stroke:0.25px #000;">Krishnan N</div>
<div class="t" style="left:360.00px;top:390.55px;font-size:14px;color:#000;-webkit-text-stroke:0.25px #000;">1011</div>
<div class="t" style="left:397.30px;top:390.55px;font-size:14px;color:#000;-webkit-text-stroke:0.25px #000;">Bhaskar Agency</div>
<div class="t" style="left:680.50px;top:390.55px;font-size:14px;color:#000;-webkit-text-stroke:0.25px #000;">2</div>
<div class="t" style="left:753.95px;top:390.55px;font-size:14px;color:#000;transform:scaleX(0.8763);transform-origin:0 0;-webkit-text-stroke:0.25px #000;">TRUE</div>
<div class="t" style="left:82.30px;top:419.75px;font-size:14px;color:#000;-webkit-text-stroke:0.25px #000;">8</div>
<div class="t" style="left:115.50px;top:419.75px;font-size:14px;color:#000;-webkit-text-stroke:0.25px #000;">North</div>
<div class="t" style="left:185.60px;top:419.75px;font-size:14px;color:#000;-webkit-text-stroke:0.25px #000;">Balaji S</div>
<div class="t" style="left:359.00px;top:419.75px;font-size:14px;color:#000;-webkit-text-stroke:0.25px #000;">1020</div>
<div class="t" style="left:397.30px;top:419.75px;font-size:14px;color:#000;-webkit-text-stroke:0.25px #000;">Rithika Store</div>
<div class="t" style="left:680.50px;top:419.75px;font-size:14px;color:#000;-webkit-text-stroke:0.25px #000;">1</div>
<div class="t" style="left:752.45px;top:419.75px;font-size:14px;color:#000;transform:scaleX(0.8250);transform-origin:0 0;-webkit-text-stroke:0.25px #000;">FALSE</div>
<div class="t" style="left:82.30px;top:448.95px;font-size:14px;color:#000;-webkit-text-stroke:0.25px #000;">9</div>
<div class="t" style="left:115.50px;top:448.95px;font-size:14px;color:#000;-webkit-text-stroke:0.25px #000;">North</div>
<div class="t" style="left:185.60px;top:448.95px;font-size:14px;color:#000;-webkit-text-stroke:0.25px #000;">Balaji S</div>
<div class="t" style="left:359.00px;top:448.95px;font-size:14px;color:#000;-webkit-text-stroke:0.25px #000;">1021</div>
<div class="t" style="left:397.30px;top:448.95px;font-size:14px;color:#000;-webkit-text-stroke:0.25px #000;">JayaShree Store</div>
<div class="t" style="left:680.50px;top:448.95px;font-size:14px;color:#000;-webkit-text-stroke:0.25px #000;">2</div>
<div class="t" style="left:753.95px;top:448.95px;font-size:14px;color:#000;transform:scaleX(0.8763);transform-origin:0 0;-webkit-text-stroke:0.25px #000;">TRUE</div>
<div class="t" style="left:78.30px;top:478.15px;font-size:14px;color:#000;-webkit-text-stroke:0.25px #000;">10</div>
<div class="t" style="left:115.50px;top:478.15px;font-size:14px;color:#000;-webkit-text-stroke:0.25px #000;">West</div>
<div class="t" style="left:185.60px;top:478.15px;font-size:14px;color:#000;-webkit-text-stroke:0.25px #000;">Ganeshan B</div>
<div class="t" style="left:359.00px;top:478.15px;font-size:14px;color:#000;-webkit-text-stroke:0.25px #000;">1001</div>
<div class="t" style="left:397.30px;top:478.15px;font-size:14px;color:#000;-webkit-text-stroke:0.25px #000;">Kannan Store</div>
<div class="t" style="left:680.50px;top:478.15px;font-size:14px;color:#000;-webkit-text-stroke:0.25px #000;">1</div>
<div class="t" style="left:752.45px;top:478.15px;font-size:14px;color:#000;transform:scaleX(0.8250);transform-origin:0 0;-webkit-text-stroke:0.25px #000;">FALSE</div>
<div class="t" style="left:78.80px;top:507.35px;font-size:14px;color:#000;-webkit-text-stroke:0.25px #000;">11</div>
<div class="t" style="left:115.50px;top:507.35px;font-size:14px;color:#000;-webkit-text-stroke:0.25px #000;">South</div>
<div class="t" style="left:185.60px;top:507.35px;font-size:14px;color:#000;-webkit-text-stroke:0.25px #000;">Sai Ganesh</div>
<div class="t" style="left:359.00px;top:507.35px;font-size:14px;color:#000;-webkit-text-stroke:0.25px #000;">1004</div>
<div class="t" style="left:397.30px;top:507.35px;font-size:14px;color:#000;-webkit-text-stroke:0.25px #000;">Rasi Store</div>
<div class="t" style="left:680.50px;top:507.35px;font-size:14px;color:#000;-webkit-text-stroke:0.25px #000;">1</div>
<div class="t" style="left:752.45px;top:507.35px;font-size:14px;color:#000;transform:scaleX(0.8250);transform-origin:0 0;-webkit-text-stroke:0.25px #000;">FALSE</div>
<div class="t" style="left:78.30px;top:536.55px;font-size:14px;color:#000;-webkit-text-stroke:0.25px #000;">12</div>
<div class="t" style="left:115.50px;top:536.55px;font-size:14px;color:#000;-webkit-text-stroke:0.25px #000;">South</div>
<div class="t" style="left:185.60px;top:536.55px;font-size:14px;color:#000;-webkit-text-stroke:0.25px #000;">Sai Ganesh</div>
<div class="t" style="left:359.00px;top:536.55px;font-size:14px;color:#000;-webkit-text-stroke:0.25px #000;">1008</div>
<div class="t" style="left:397.30px;top:536.55px;font-size:14px;color:#000;-webkit-text-stroke:0.25px #000;">Mithra Store</div>
<div class="t" style="left:680.50px;top:536.55px;font-size:14px;color:#000;-webkit-text-stroke:0.25px #000;">1</div>
<div class="t" style="left:752.45px;top:536.55px;font-size:14px;color:#000;transform:scaleX(0.8250);transform-origin:0 0;-webkit-text-stroke:0.25px #000;">FALSE</div>
<div class="t" style="left:78.30px;top:565.75px;font-size:14px;color:#000;-webkit-text-stroke:0.25px #000;">13</div>
<div class="t" style="left:115.50px;top:565.75px;font-size:14px;color:#000;-webkit-text-stroke:0.25px #000;">East</div>
<div class="t" style="left:185.60px;top:565.75px;font-size:14px;color:#000;-webkit-text-stroke:0.25px #000;">Krishnan N</div>
<div class="t" style="left:360.00px;top:565.75px;font-size:14px;color:#000;-webkit-text-stroke:0.25px #000;">1011</div>
<div class="t" style="left:397.30px;top:565.75px;font-size:14px;color:#000;-webkit-text-stroke:0.25px #000;">Bhaskar Agency</div>
<div class="t" style="left:680.50px;top:565.75px;font-size:14px;color:#000;-webkit-text-stroke:0.25px #000;">1</div>
<div class="t" style="left:752.45px;top:565.75px;font-size:14px;color:#000;transform:scaleX(0.8250);transform-origin:0 0;-webkit-text-stroke:0.25px #000;">FALSE</div>
<div class="t" style="left:78.30px;top:594.95px;font-size:14px;color:#000;-webkit-text-stroke:0.25px #000;">14</div>
<div class="t" style="left:115.50px;top:594.95px;font-size:14px;color:#000;-webkit-text-stroke:0.25px #000;">East</div>
<div class="t" style="left:185.60px;top:594.95px;font-size:14px;color:#000;-webkit-text-stroke:0.25px #000;">Krishnan N</div>
<div class="t" style="left:359.00px;top:594.95px;font-size:14px;color:#000;-webkit-text-stroke:0.25px #000;">1018</div>
<div class="t" style="left:397.30px;top:594.95px;font-size:14px;color:#000;-webkit-text-stroke:0.25px #000;">Pooja Store</div>
<div class="t" style="left:680.50px;top:594.95px;font-size:14px;color:#000;-webkit-text-stroke:0.25px #000;">1</div>
<div class="t" style="left:752.45px;top:594.95px;font-size:14px;color:#000;transform:scaleX(0.8250);transform-origin:0 0;-webkit-text-stroke:0.25px #000;">FALSE</div>
<div class="t" style="left:78.30px;top:624.15px;font-size:14px;color:#000;-webkit-text-stroke:0.25px #000;">15</div>
<div class="t" style="left:115.50px;top:624.15px;font-size:14px;color:#000;-webkit-text-stroke:0.25px #000;">North</div>
<div class="t" style="left:185.60px;top:624.15px;font-size:14px;color:#000;-webkit-text-stroke:0.25px #000;">Balaji S</div>
<div class="t" style="left:359.00px;top:624.15px;font-size:14px;color:#000;-webkit-text-stroke:0.25px #000;">1021</div>
<div class="t" style="left:397.30px;top:624.15px;font-size:14px;color:#000;-webkit-text-stroke:0.25px #000;">JayaShree Store</div>
<div class="t" style="left:680.50px;top:624.15px;font-size:14px;color:#000;-webkit-text-stroke:0.25px #000;">1</div>
<div class="t" style="left:752.45px;top:624.15px;font-size:14px;color:#000;transform:scaleX(0.8250);transform-origin:0 0;-webkit-text-stroke:0.25px #000;">FALSE</div>
<div style="left:60px;top:236px;width:946px;height:1px;background:#2e2e2e"></div>
<div style="left:60px;top:265px;width:946px;height:1px;background:#2e2e2e"></div>
<div style="left:60px;top:294px;width:946px;height:1px;background:#2e2e2e"></div>
<div style="left:60px;top:324px;width:946px;height:1px;background:#2e2e2e"></div>
<div style="left:60px;top:353px;width:946px;height:1px;background:#2e2e2e"></div>
<div style="left:60px;top:382px;width:946px;height:1px;background:#2e2e2e"></div>
<div style="left:60px;top:411px;width:946px;height:1px;background:#2e2e2e"></div>
<div style="left:60px;top:440px;width:946px;height:1px;background:#2e2e2e"></div>
<div style="left:60px;top:470px;width:946px;height:1px;background:#2e2e2e"></div>
<div style="left:60px;top:499px;width:946px;height:1px;background:#2e2e2e"></div>
<div style="left:60px;top:528px;width:946px;height:1px;background:#2e2e2e"></div>
<div style="left:60px;top:557px;width:946px;height:1px;background:#2e2e2e"></div>
<div style="left:60px;top:586px;width:946px;height:1px;background:#2e2e2e"></div>
<div style="left:60px;top:616px;width:946px;height:1px;background:#2e2e2e"></div>
<div style="left:60px;top:645px;width:946px;height:1px;background:#2e2e2e"></div>
<div style="left:59px;top:207px;width:1px;height:439px;background:#2e2e2e"></div>
<div style="left:112px;top:207px;width:1px;height:439px;background:#2e2e2e"></div>
<div style="left:182px;top:207px;width:1px;height:439px;background:#2e2e2e"></div>
<div style="left:282px;top:207px;width:1px;height:439px;background:#2e2e2e"></div>
<div style="left:393px;top:207px;width:1px;height:439px;background:#2e2e2e"></div>
<div style="left:534px;top:207px;width:1px;height:439px;background:#2e2e2e"></div>
<div style="left:691px;top:207px;width:1px;height:439px;background:#2e2e2e"></div>
<div style="left:848px;top:207px;width:1px;height:439px;background:#2e2e2e"></div>
<div style="left:1005px;top:207px;width:1px;height:439px;background:#2e2e2e"></div>
<div style="left:282px;top:207px;width:2px;height:438.5px;background:#6a6ea8"></div>
<div style="left:393px;top:207px;width:2px;height:438.5px;background:#7c8198"></div>
<div style="left:282.8px;top:644.5px;width:111px;height:1.6px;background:#5766a6"></div>
<div style="left:281px;top:643.3px;width:4px;height:4px;background:#5766a6"></div>
<div style="left:392.2px;top:643.3px;width:4px;height:4px;background:#5766a6"></div>
<svg style="left:535px;top:236.5px;" width="7" height="7" viewBox="0 0 7 7"><path d="M0 0 L7 0 L0 7 Z" fill="#1d6e31"/></svg>
<svg style="left:692px;top:236.5px;" width="7" height="7" viewBox="0 0 7 7"><path d="M0 0 L7 0 L0 7 Z" fill="#1d6e31"/></svg>
<svg style="left:535px;top:265.5px;" width="7" height="7" viewBox="0 0 7 7"><path d="M0 0 L7 0 L0 7 Z" fill="#1d6e31"/></svg>
<svg style="left:692px;top:265.5px;" width="7" height="7" viewBox="0 0 7 7"><path d="M0 0 L7 0 L0 7 Z" fill="#1d6e31"/></svg>
<svg style="left:535px;top:294.5px;" width="7" height="7" viewBox="0 0 7 7"><path d="M0 0 L7 0 L0 7 Z" fill="#1d6e31"/></svg>
<svg style="left:692px;top:294.5px;" width="7" height="7" viewBox="0 0 7 7"><path d="M0 0 L7 0 L0 7 Z" fill="#1d6e31"/></svg>
<svg style="left:535px;top:324.5px;" width="7" height="7" viewBox="0 0 7 7"><path d="M0 0 L7 0 L0 7 Z" fill="#1d6e31"/></svg>
<svg style="left:692px;top:324.5px;" width="7" height="7" viewBox="0 0 7 7"><path d="M0 0 L7 0 L0 7 Z" fill="#1d6e31"/></svg>
<svg style="left:535px;top:353.5px;" width="7" height="7" viewBox="0 0 7 7"><path d="M0 0 L7 0 L0 7 Z" fill="#1d6e31"/></svg>
<svg style="left:692px;top:353.5px;" width="7" height="7" viewBox="0 0 7 7"><path d="M0 0 L7 0 L0 7 Z" fill="#1d6e31"/></svg>
<svg style="left:535px;top:382.5px;" width="7" height="7" viewBox="0 0 7 7"><path d="M0 0 L7 0 L0 7 Z" fill="#1d6e31"/></svg>
<svg style="left:692px;top:382.5px;" width="7" height="7" viewBox="0 0 7 7"><path d="M0 0 L7 0 L0 7 Z" fill="#1d6e31"/></svg>
<svg style="left:535px;top:411.5px;" width="7" height="7" viewBox="0 0 7 7"><path d="M0 0 L7 0 L0 7 Z" fill="#1d6e31"/></svg>
<svg style="left:692px;top:411.5px;" width="7" height="7" viewBox="0 0 7 7"><path d="M0 0 L7 0 L0 7 Z" fill="#1d6e31"/></svg>
<svg style="left:535px;top:440.5px;" width="7" height="7" viewBox="0 0 7 7"><path d="M0 0 L7 0 L0 7 Z" fill="#1d6e31"/></svg>
<svg style="left:692px;top:440.5px;" width="7" height="7" viewBox="0 0 7 7"><path d="M0 0 L7 0 L0 7 Z" fill="#1d6e31"/></svg>
<svg style="left:535px;top:470.5px;" width="7" height="7" viewBox="0 0 7 7"><path d="M0 0 L7 0 L0 7 Z" fill="#1d6e31"/></svg>
<svg style="left:692px;top:470.5px;" width="7" height="7" viewBox="0 0 7 7"><path d="M0 0 L7 0 L0 7 Z" fill="#1d6e31"/></svg>
<svg style="left:535px;top:499.5px;" width="7" height="7" viewBox="0 0 7 7"><path d="M0 0 L7 0 L0 7 Z" fill="#1d6e31"/></svg>
<svg style="left:692px;top:499.5px;" width="7" height="7" viewBox="0 0 7 7"><path d="M0 0 L7 0 L0 7 Z" fill="#1d6e31"/></svg>
<svg style="left:535px;top:528.5px;" width="7" height="7" viewBox="0 0 7 7"><path d="M0 0 L7 0 L0 7 Z" fill="#1d6e31"/></svg>
<svg style="left:692px;top:528.5px;" width="7" height="7" viewBox="0 0 7 7"><path d="M0 0 L7 0 L0 7 Z" fill="#1d6e31"/></svg>
<svg style="left:535px;top:557.5px;" width="7" height="7" viewBox="0 0 7 7"><path d="M0 0 L7 0 L0 7 Z" fill="#1d6e31"/></svg>
<svg style="left:692px;top:557.5px;" width="7" height="7" viewBox="0 0 7 7"><path d="M0 0 L7 0 L0 7 Z" fill="#1d6e31"/></svg>
<svg style="left:535px;top:586.5px;" width="7" height="7" viewBox="0 0 7 7"><path d="M0 0 L7 0 L0 7 Z" fill="#1d6e31"/></svg>
<svg style="left:692px;top:586.5px;" width="7" height="7" viewBox="0 0 7 7"><path d="M0 0 L7 0 L0 7 Z" fill="#1d6e31"/></svg>
<svg style="left:535px;top:616.5px;" width="7" height="7" viewBox="0 0 7 7"><path d="M0 0 L7 0 L0 7 Z" fill="#1d6e31"/></svg>
<svg style="left:692px;top:616.5px;" width="7" height="7" viewBox="0 0 7 7"><path d="M0 0 L7 0 L0 7 Z" fill="#1d6e31"/></svg>
<div style="left:847.5px;top:206px;width:159.5px;height:31.5px;border:2px solid #2a6a43"></div>
<div style="left:1003.5px;top:234px;width:5px;height:5px;background:#278047;border:1px solid #fff"></div>
<div class="t" style="left:851.90px;top:215.57px;font-size:13.5px;color:#111;transform:scaleX(0.9779);transform-origin:0 0;">=COUNTIFS(<span style="color:#4b5ea3">D2:D16</span>,</div>
<div style="left:980.5px;top:212px;width:1px;height:20px;background:#111"></div>
<div style="left:859.5px;top:238.5px;width:290px;height:19px;background:#fff;border:1px solid #d6d6d6;box-shadow:1px 1px 2px rgba(0,0,0,.12)"></div>
<div class="t" style="left:865.80px;top:241.89px;font-size:11px;color:#6e6e6e;transform:scaleX(0.9829);transform-origin:0 0;">COUNTIFS(criteria_range1, <b style="color:#333">criteria1</b>, [criteria_range2, ...)</div>
<div style="left:1231px;top:188px;width:19px;height:487px;background:#dcdcdc"></div>
<div style="left:1230.5px;top:188px;width:1px;height:487px;background:#c8c8c8"></div>
<div style="left:1233px;top:188px;width:14.5px;height:15px;background:#fff"></div>
<svg style="left:1236.5px;top:193px;" width="8" height="5" viewBox="0 0 8 5"><path d="M0 4.5 L4 0.5 L8 4.5 Z" fill="#555"/></svg>
<div style="left:1233px;top:226px;width:14.5px;height:341.5px;background:#fff;border:1px solid #d0d0d0"></div>
<div style="left:1233px;top:655px;width:14.5px;height:18px;background:#fff"></div>
<svg style="left:1236.5px;top:665px;" width="8" height="5" viewBox="0 0 8 5"><path d="M0 0 L8 0 L4 4 Z" fill="#555"/></svg>
<div style="left:30px;top:673px;width:1220px;height:22px;background:#e6e6e6"></div>
<div style="left:30px;top:673px;width:1201px;height:1px;background:#cdcdcd"></div>
<svg style="left:48px;top:680px;" width="5" height="9" viewBox="0 0 5 9"><path d="M4 0.5 L0.8 4.5 L4 8.5" stroke="#cfcfcf" fill="none" stroke-width="1.2"/></svg>
<svg style="left:70.5px;top:680px;" width="5" height="9" viewBox="0 0 5 9"><path d="M0.8 0.5 L4 4.5 L0.8 8.5" stroke="#cfcfcf" fill="none" stroke-width="1.2"/></svg>
<div style="left:105px;top:673px;width:126px;height:21px;background:#fff"></div>
<div style="left:105px;top:692px;width:126px;height:1px;background:#1f6e3d"></div>
<div class="t" style="left:113.30px;top:677.92px;font-size:12.5px;color:#1f6e3d;font-weight:bold;transform:scaleX(0.9623);transform-origin:0 0;">Duplication_Check</div>
<svg style="left:255px;top:676.5px;" width="15" height="15" viewBox="0 0 15 15"><circle cx="7.5" cy="7.5" r="6.6" fill="none" stroke="#777" stroke-width="1.1"/><path d="M7.5 4 V11 M4 7.5 H11" stroke="#777" stroke-width="1.2"/></svg>
<div style="left:889px;top:675px;width:342px;height:17px;background:#e3e3e3"></div>
<svg style="left:877px;top:679px;" width="3" height="10" viewBox="0 0 3 10"><circle cx="1.3" cy="1.3" r="0.9" fill="#888"/><circle cx="1.3" cy="5" r="0.9" fill="#888"/><circle cx="1.3" cy="8.7" r="0.9" fill="#888"/></svg>
<div style="left:891px;top:676px;width:15px;height:15px;background:#fff"></div>
<svg style="left:896px;top:680.5px;" width="5" height="8" viewBox="0 0 5 8"><path d="M5 0 L0 4 L5 8 Z" fill="#555"/></svg>
<div style="left:906px;top:676px;width:281px;height:15px;background:#fff;border:1px solid #d8d8d8;border-left:1px solid #777"></div>
<div style="left:1216px;top:676px;width:15px;height:15px;background:#fff"></div>
<svg style="left:1222px;top:680.5px;" width="5" height="8" viewBox="0 0 5 8"><path d="M0 0 L5 4 L0 8 Z" fill="#555"/></svg>
<div style="left:30px;top:695px;width:1220px;height:21px;background:#f3f3f3"></div>
<div style="left:30px;top:716px;width:1220px;height:4px;background:#c9c9c9"></div>
<div class="t" style="left:35.50px;top:700.69px;font-size:11px;color:#444;transform:scaleX(0.8148);transform-origin:0 0;">Enter</div>
<svg style="left:76px;top:698px;" width="12" height="13" viewBox="0 0 12 13"><circle cx="3" cy="3" r="2.6" fill="#666"/><path d="M5 1.5 H11.5 V3.5 H5 Z" fill="#666"/><rect x="1.5" y="5" width="10" height="7.5" fill="none" stroke="#999" stroke-width="1"/><path d="M4.5 5 V12.5 M8 5 V12.5" stroke="#999" stroke-width="0.9"/></svg>
<svg style="left:1014px;top:699px;" width="13" height="13" viewBox="0 0 13 13"><rect x="0.5" y="0.5" width="12" height="12" fill="none" stroke="#777" stroke-width="1"/><path d="M4.5 0.5 V12.5 M8.5 0.5 V12.5 M0.5 4.5 H12.5 M0.5 8.5 H12.5" stroke="#777" stroke-width="1"/></svg>
<svg style="left:1043px;top:699px;" width="13" height="13" viewBox="0 0 13 13"><rect x="0.5" y="0.5" width="12" height="12" fill="none" stroke="#777" stroke-width="1"/><rect x="3" y="2.5" width="7" height="8" fill="none" stroke="#777" stroke-width="1"/><path d="M4.5 5 H8.5 M4.5 7 H8.5" stroke="#777" stroke-width="0.8"/></svg>
<svg style="left:1071px;top:699px;" width="13" height="13" viewBox="0 0 13 13"><path d="M0.5 0.5 H12.5 V12.5 H0.5 Z M6.5 0.5 V6.5 H0.5 M6.5 6.5 H12.5" fill="none" stroke="#777" stroke-width="1"/></svg>
<div style="left:1095px;top:705.5px;width:7px;height:1.6px;background:#555"></div>
<div style="left:1106px;top:705.8px;width:94px;height:1px;background:#aaa"></div>
<div style="left:1153.5px;top:701.5px;width:1px;height:8px;background:#999"></div>
<div style="left:1203px;top:705.5px;width:9px;height:1.6px;background:#555"></div>
<div style="left:1206.7px;top:701.8px;width:1.6px;height:9px;background:#555"></div>
<div class="t" style="left:1221.00px;top:701.11px;font-size:10.5px;color:#c4c4c4;transform:scaleX(0.8519);transform-origin:0 0;">115%</div>
<div style="left:567px;top:286px;width:147px;height:147px;border-radius:50%;background:#fff;box-shadow:0 1px 10px rgba(0,0,0,0.25)"></div>
<div style="left:577px;top:296px;width:127px;height:127px;border-radius:50%;background:#56abee"></div>
<svg style="left:618px;top:323px;" width="56" height="74" viewBox="0 0 56 74"><path d="M7.5 3.8 Q1.5 0.3 1.5 7.5 L1.5 64.5 Q1.5 71.7 7.5 68.2 L50.5 40.5 Q55.5 36 50.5 32.5 Z" fill="#fff"/></svg>
</body></html>
